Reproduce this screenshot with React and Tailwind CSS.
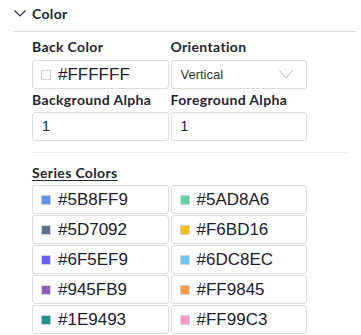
import React from 'react'

const series = [
  ['#5B8FF9', '#5AD8A6'],
  ['#5D7092', '#F6BD16'],
  ['#6F5EF9', '#6DC8EC'],
  ['#945FB9', '#FF9845'],
  ['#1E9493', '#FF99C3'],
]

const label = "font-['Lato',sans-serif] font-bold text-[14px] leading-[17px] tracking-[0.35px] text-[#222634]"
const box = 'h-[29px] border border-[#dcdcdc] rounded-[3px] bg-white flex items-center'
const mono = "font-['Liberation_Sans',Arial,sans-serif] text-[#1c2030]"

function Swatch({ color }) {
  return (
    <span
      className="w-[10px] h-[10px] border border-[#d4d4d4] shrink-0"
      style={{ backgroundColor: color }}
    />
  )
}

export default function App() {
  return (
    <div className="w-[361px] h-[335px] bg-white overflow-hidden">
      {/* Section header */}
      <div className="flex items-center h-[26px] mb-[5px] pl-[14px] gap-[6px]">
        <svg width="12" height="7" viewBox="0 0 12 7" fill="none">
          <path d="M0.5 0.5 L6 6 L11.5 0.5" stroke="#2a2d3a" strokeWidth="1.2" />
        </svg>
        <span className={label}>Color</span>
      </div>
      <div className="ml-[13px] mr-[5px] h-px bg-[#dedede]" />

      <div className="pl-[32px]">
        <div className="grid grid-cols-2 w-[275px] gap-x-[2px]">
          <div className={`${label} pt-[6px] pb-[5px]`}>Back Color</div>
          <div className={`${label} pt-[6px] pb-[5px]`}>Orientation</div>
          <div className={`${box} pl-[8px] gap-[7px]`}>
            <span className="w-[10px] h-[10px] border border-[#d0d0d0] bg-white" />
            <span className={`${mono} text-[17px]`}>#FFFFFF</span>
          </div>
          <div className={`${box} pl-[9px] pr-[13px] justify-between`}>
            <span className={`${mono} text-[13px] text-[#333]`}>Vertical</span>
            <svg width="14" height="9" viewBox="0 0 14 9" fill="none">
              <path d="M0.5 0.5 L7 8 L13.5 0.5" stroke="#bdbdbd" strokeWidth="1" />
            </svg>
          </div>
          <div className={`${label} pt-[2px] pb-[4px]`}>Background Alpha</div>
          <div className={`${label} pt-[2px] pb-[4px]`}>Foreground Alpha</div>
          <div className={`${box} pl-[9px]`}>
            <span className={`${mono} text-[14px]`}>1</span>
          </div>
          <div className={`${box} pl-[9px]`}>
            <span className={`${mono} text-[14px]`}>1</span>
          </div>
        </div>

        <div className="mt-[11px] w-[318px] h-px bg-[#ebebeb]" />

        <div className={`${label} pt-[11px] pb-[4px]`}>
          <span className="underline underline-offset-[2px]">Series Colors</span>
        </div>

        <div className="grid grid-cols-2 w-[275px] gap-x-[2px] gap-y-[1px]">
          {series.flat().map((c) => (
            <div key={c} className={`${box} pl-[8px] gap-[7px]`}>
              <Swatch color={c} />
              <span className={`${mono} text-[17px]`}>{c}</span>
            </div>
          ))}
        </div>
      </div>
    </div>
  )
}
